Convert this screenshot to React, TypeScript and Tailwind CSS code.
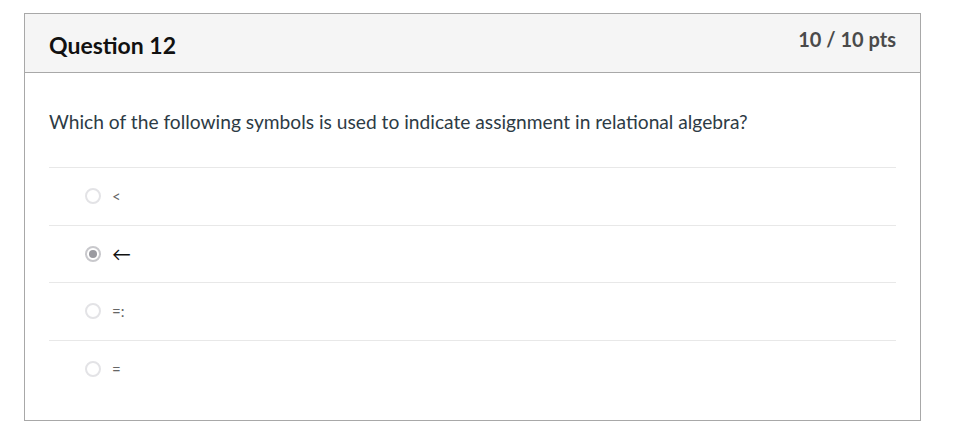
const options = [
  { label: '<', selected: false },
  { label: '←', selected: true },
  { label: '=:', selected: false },
  { label: '=', selected: false },
]

function Radio({ selected }: { selected: boolean }) {
  if (selected) {
    return (
      <span className="flex h-4 w-4 items-center justify-center rounded-full border-2 border-[#c8c8cc]">
        <span className="h-2 w-2 rounded-full bg-[#9a9aa0]" />
      </span>
    )
  }
  return <span className="block h-4 w-4 rounded-full border-2 border-[#e3e3e6]" />
}

export default function App() {
  return (
    <div className="min-h-[437px] bg-white pl-6 pt-[13px] font-['Lato','Liberation_Sans',sans-serif]">
      <div className="w-[897px] h-[408px] border border-[#a8a8a8]">
        <div className="flex h-[59px] justify-between border-b border-[#a8a8a8] bg-[#f5f5f5] px-6">
          <h2 className="pt-[17px] text-[23px] font-bold leading-[28px] text-[#111]">Question 12</h2>
          <div className="pt-[12px] text-[20px] font-bold leading-[26px] text-[#4a4a4a]">10 / 10 pts</div>
        </div>
        <div className="px-6 pt-[37px]">
          <p className="text-[19.2px] leading-6 text-[#2d3b45]">
            Which of the following symbols is used to indicate assignment in relational algebra?
          </p>
          <div className="mt-[33px]">
            {options.map((opt, i) => (
              <div key={i} className="flex h-[57.5px] items-center gap-[11px] border-t border-[#e8e8e8] pl-9">
                <Radio selected={opt.selected} />
                <span className={opt.selected ? 'text-[19px] text-[#111]' : 'text-[15px] text-[#666]'}>{opt.label}</span>
              </div>
            ))}
          </div>
        </div>
      </div>
    </div>
  )
}
